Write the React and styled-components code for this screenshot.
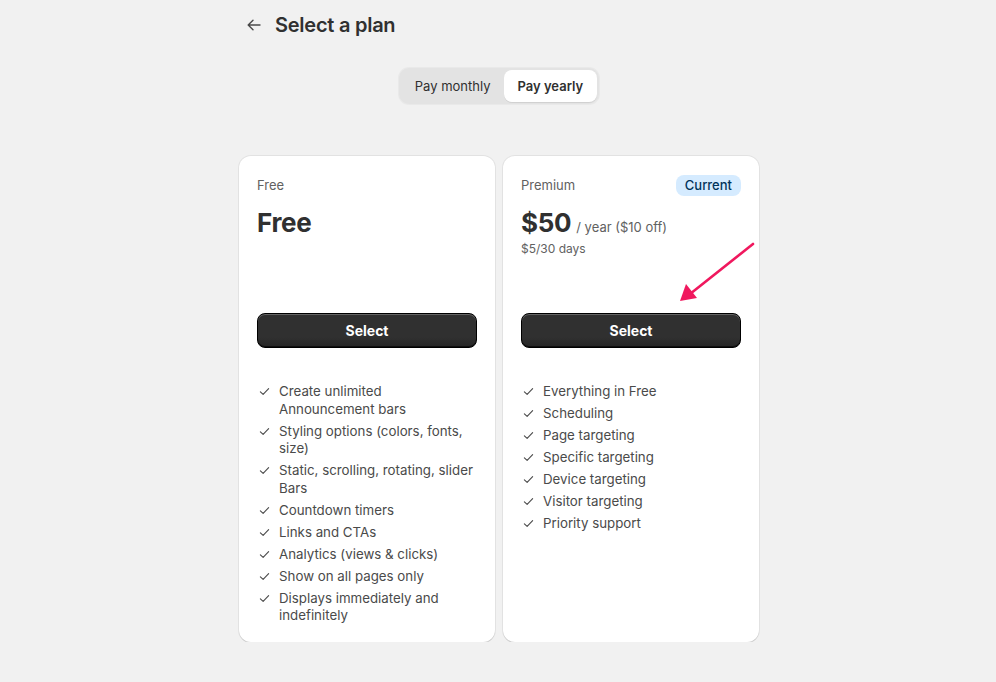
import React from 'react';
import styled, { createGlobalStyle } from 'styled-components';

const GlobalStyle = createGlobalStyle`
  html, body {
    margin: 0;
    padding: 0;
    background: #f1f1f1;
    font-family: Inter, "Noto Sans", sans-serif;
    color: #303030;
    -webkit-font-smoothing: antialiased;
  }
`;

const Page = styled.div`
  width: 520px;
  margin: 0 0 0 calc(50% - 259px);
  padding-top: 11px;
  display: flex;
  flex-direction: column;
`;

const Header = styled.div`
  display: flex;
  align-items: center;
  gap: 12px;
  padding-left: 6px;
  height: 28px;
`;

const BackButton = styled.button`
  border: 0;
  background: transparent;
  padding: 0;
  width: 18px;
  height: 18px;
  display: flex;
  align-items: center;
  justify-content: center;
  color: #4a4a4a;
  cursor: pointer;
`;

const Title = styled.h1`
  margin: 0;
  font-size: 20px;
  font-weight: 600;
  letter-spacing: -0.25px;
  color: #303030;
`;

const ToggleRow = styled.div`
  display: flex;
  justify-content: center;
  margin-top: 29px;
`;

const Toggle = styled.div`
  display: flex;
  padding: 2px;
  background: #e3e3e3;
  border-radius: 10px;
  box-shadow: 0 0 0 1px #e9e9e9;
`;

const ToggleOption = styled.button`
  border: 0;
  font-family: inherit;
  font-size: 13px;
  height: 32px;
  padding: 0 13.5px;
  border-radius: 8px;
  cursor: pointer;
  color: #303030;
  background: ${p => ( p.active ? '#ffffff' : 'transparent' )};
  font-weight: ${p => ( p.active ? 600 : 400 )};
  box-shadow: ${p => ( p.active ? '0 1px 0 rgba(0,0,0,0.08)' : 'none' )};
`;

const Cards = styled.div`
  position: relative;
  display: grid;
  grid-template-columns: 1fr 1fr;
  gap: 8px;
  margin-top: 52px;
`;

const Card = styled.div`
  background: #ffffff;
  border-radius: 12px;
  box-shadow: 0 0 0 1px rgba(0, 0, 0, 0.06), 0 1px 0 rgba(0, 0, 0, 0.1);
  padding: 19px 18px 17px;
  display: flex;
  flex-direction: column;
`;

const CardTop = styled.div`
  display: flex;
  justify-content: space-between;
  align-items: center;
  height: 20px;
`;

const PlanName = styled.div`
  font-size: 13px;
  color: #616161;
`;

const Badge = styled.span`
  background: #d5ebff;
  color: #00335a;
  font-size: 13px;
  font-weight: 500;
  padding: 2px 9px;
  border-radius: 8px;
  line-height: 17px;
`;

const PriceBlock = styled.div`
  margin-top: 12px;
  height: 106px;
`;

const PriceLine = styled.div`
  display: flex;
  align-items: baseline;
  gap: 5px;
`;

const Price = styled.span`
  font-size: 26px;
  font-weight: 700;
  letter-spacing: -0.3px;
  color: #303030;
  line-height: 32px;
`;

const PriceNote = styled.span`
  font-size: 13px;
  color: #616161;
`;

const SubNote = styled.div`
  font-size: 12px;
  color: #616161;
  margin-top: 2px;
`;

const SelectButton = styled.button`
  width: 100%;
  height: 35px;
  border-radius: 8px;
  border: 1px solid #000;
  background: linear-gradient(180deg, #303030 0%, #303030 70%, #262626 100%);
  box-shadow: inset 0 1px 0 rgba(255, 255, 255, 0.25), inset 0 -1px 0 rgba(0, 0, 0, 0.6);
  color: #fff;
  font-family: inherit;
  font-size: 14px;
  font-weight: 650;
  cursor: pointer;
`;

const Features = styled.ul`
  list-style: none;
  margin: 35px 0 0;
  padding: 0;
  display: flex;
  flex-direction: column;
  gap: 4.5px;
`;

const Feature = styled.li`
  display: grid;
  grid-template-columns: 22px 1fr;
  font-size: 13.3px;
  line-height: 17.5px;
  color: #4a4a4a;

  svg {
    margin-top: 3px;
    margin-left: 2px;
  }
`;

const Arrow = styled.svg`
  position: absolute;
  right: 1px;
  top: 86px;
  pointer-events: none;
`;

const Check = () => (
  <svg width="11" height="11" viewBox="0 0 12 12" fill="none">
    <path d="M1.5 6.3 L4.5 9.2 L10.5 2.8" stroke="#4a4a4a" strokeWidth="1.2" strokeLinecap="round" strokeLinejoin="round" />
  </svg>
);

const plans = [
  {
    name: 'Free',
    price: 'Free',
    features: [
      'Create unlimited Announcement bars',
      'Styling options (colors, fonts, size)',
      'Static, scrolling, rotating, slider Bars',
      'Countdown timers',
      'Links and CTAs',
      'Analytics (views & clicks)',
      'Show on all pages only',
      'Displays immediately and indefinitely',
    ],
  },
  {
    name: 'Premium',
    price: '$50',
    note: '/ year ($10 off)',
    sub: '$5/30 days',
    current: true,
    features: [
      'Everything in Free',
      'Scheduling',
      'Page targeting',
      'Specific targeting',
      'Device targeting',
      'Visitor targeting',
      'Priority support',
    ],
  },
];

export default function App() {
  return (
    <>
      <GlobalStyle />
      <Page>
        <Header>
          <BackButton aria-label="Back">
            <svg width="16" height="16" viewBox="0 0 16 16" fill="none">
              <path d="M14 8H2.5M7 3.2 2.2 8 7 12.8" stroke="#4a4a4a" strokeWidth="1.4" strokeLinecap="round" strokeLinejoin="round" />
            </svg>
          </BackButton>
          <Title>Select a plan</Title>
        </Header>

        <ToggleRow>
          <Toggle>
            <ToggleOption>Pay monthly</ToggleOption>
            <ToggleOption active>Pay yearly</ToggleOption>
          </Toggle>
        </ToggleRow>

        <Cards>
          {plans.map( plan => (
            <Card key={plan.name}>
              <CardTop>
                <PlanName>{plan.name}</PlanName>
                {plan.current && <Badge>Current</Badge>}
              </CardTop>
              <PriceBlock>
                <PriceLine>
                  <Price>{plan.price}</Price>
                  {plan.note && <PriceNote>{plan.note}</PriceNote>}
                </PriceLine>
                {plan.sub && <SubNote>{plan.sub}</SubNote>}
              </PriceBlock>
              <SelectButton>Select</SelectButton>
              <Features>
                {plan.features.map( f => (
                  <Feature key={f}>
                    <Check />
                    <span>{f}</span>
                  </Feature>
                ))}
              </Features>
            </Card>
          ))}
          <Arrow width="80" height="64" viewBox="0 0 80 64">
            <path d="M75 2 L12 52" stroke="#f0185e" strokeWidth="2.6" strokeLinecap="round" />
            <path d="M2 59 L8 42 L19 56 Z" fill="#f0185e" />
          </Arrow>
        </Cards>
      </Page>
    </>
  );
}
